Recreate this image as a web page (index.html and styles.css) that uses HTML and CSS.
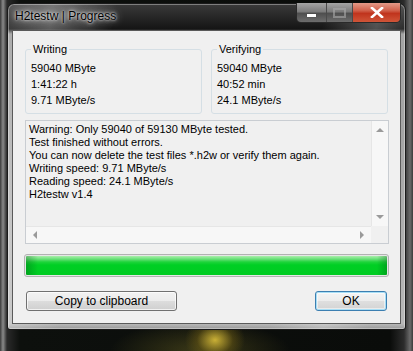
FILE: index.html
```html
<!DOCTYPE html>
<html lang="en">
<head>
    <meta charset="UTF-8">
    <title>H2testw | Progress</title>
    <link rel="stylesheet" href="styles.css">
</head>
<body>
    <div class="window">
        <div class="titlebar">
            <span class="title">H2testw | Progress</span>
            <div class="caption">
                <span class="cap cap-min"><i></i></span>
                <span class="cap cap-max"><i></i></span>
                <span class="cap cap-close">
                    <svg width="14" height="11" viewBox="0 0 14 11"><path d="M2 1 L12 10 M12 1 L2 10" stroke="#fff" stroke-width="2.6" stroke-linecap="square"/></svg>
                </span>
            </div>
        </div>
        <div class="client">
            <div class="groups">
                <fieldset class="group">
                    <legend>Writing</legend>
                    <p>59040 MByte</p>
                    <p>1:41:22 h</p>
                    <p>9.71 MByte/s</p>
                </fieldset>
                <fieldset class="group">
                    <legend>Verifying</legend>
                    <p>59040 MByte</p>
                    <p>40:52 min</p>
                    <p>24.1 MByte/s</p>
                </fieldset>
            </div>
            <div class="log">
                <div class="log-text">
                    <p>Warning: Only 59040 of 59130 MByte tested.</p>
                    <p>Test finished without errors.</p>
                    <p>You can now delete the test files *.h2w or verify them again.</p>
                    <p>Writing speed: 9.71 MByte/s</p>
                    <p>Reading speed: 24.1 MByte/s</p>
                    <p>H2testw v1.4</p>
                </div>
                <div class="vscroll"><span class="arr up"></span><span class="arr down"></span></div>
                <div class="hscroll"><span class="arr left"></span><span class="arr right"></span></div>
                <div class="corner"></div>
            </div>
            <div class="progress"><div class="fill"></div></div>
            <div class="buttons">
                <button class="btn btn-copy">Copy to clipboard</button>
                <button class="btn btn-ok">OK</button>
            </div>
        </div>
    </div>
</body>
</html>
```
FILE: styles.css
```css
body {
    margin: 0;
    padding: 3px 7px 0;
    height: 348px;
    overflow: hidden;
    font-family: "Liberation Sans", Arial, sans-serif;
    background:
        radial-gradient(ellipse 30px 24px at 215px 340px, rgba(230, 200, 60, 0.85), rgba(120, 100, 20, 0.4) 60%, transparent),
        radial-gradient(ellipse 90px 30px at 200px 351px, rgba(90, 85, 30, 0.6), transparent),
        linear-gradient(to right, #3a3a3a 0, #8a8a8a 3px, #2a2a2a 7px, #0d100d 20px, #0a0c0a 390px, #2c2c2c 404px, #6a6a6a 410px, #3a3a3a 413px);
}
.window {
    width: 399px;
    height: 327px;
    box-sizing: border-box;
    border: 1px solid #1a1a1a;
    border-radius: 7px 7px 3px 3px;
    background:
        linear-gradient(100deg, rgba(255, 255, 255, 0.15) 0, rgba(255, 255, 255, 0.3) 10%, transparent 24%, transparent 70%, rgba(255, 255, 255, 0.25) 82%, transparent 92%),
        linear-gradient(to bottom, #3a3a3a 0, #151515 25px, #9a9a9a 30px, #b8b8b8 320px, #8a8a8a 327px);
    box-shadow: inset 0 0 0 1px rgba(255, 255, 255, 0.35);
    display: flex;
    flex-direction: column;
}
.titlebar {
    height: 26px;
    display: flex;
    justify-content: space-between;
    align-items: flex-start;
}
.title {
    margin: 5px 0 0 5px;
    padding: 0 2px;
    font-size: 12px;
    line-height: 14px;
    color: #000;
    text-shadow: 0 0 8px #ddd, 0 0 4px #ddd, 0 0 2px #eee;
}
.caption {
    display: flex;
    margin: -1px 4px 0 0;
    height: 19px;
    border: 1px solid #2a2a2a;
    border-top: none;
    border-radius: 0 0 5px 5px;
    overflow: hidden;
}
.cap {
    display: flex;
    align-items: center;
    justify-content: center;
    height: 19px;
}
.cap-min, .cap-max {
    width: 29px;
    border-right: 1px solid #4a4a4a;
    background: linear-gradient(to bottom, #a5a5a5 0, #7c7c7c 45%, #4f4f4f 55%, #6d6d6d 100%);
}
.cap-max {
    width: 25px;
}
.cap-min i {
    display: block;
    width: 9px;
    height: 3px;
    margin-top: 6px;
    background: #fff;
    box-shadow: 0 0 1px #333;
}
.cap-max i {
    display: block;
    width: 9px;
    height: 6px;
    border: 2px solid #aaa;
    opacity: 0.6;
}
.cap-close {
    width: 47px;
    background: linear-gradient(to bottom, #e39a88 0, #d0604a 40%, #c0341d 55%, #d05538 100%);
}
.client {
    margin: 0 4px;
    height: 294px;
    box-sizing: border-box;
    border: 1px solid #5a5a5a;
    background: #f0f0f0;
    padding: 11px 12px 0 12px;
    font-size: 11px;
    color: #000;
}
.client p {
    margin: 0;
}
.groups {
    display: grid;
    grid-template-columns: 177px 177px;
    gap: 9px;
}
.group {
    margin: 0;
    height: 72px;
    box-sizing: border-box;
    border: 1px solid #d5dfe5;
    border-radius: 3px;
    padding: 4px 5px 0;
}
.group legend {
    padding: 0 2px;
    line-height: 14px;
}
.group p {
    line-height: 16px;
}
.log {
    margin-top: 6px;
    width: 364px;
    height: 124px;
    box-sizing: border-box;
    border: 1px solid #c9cdd2;
    background: #f0f0f0;
    display: grid;
    grid-template-columns: 1fr 17px;
    grid-template-rows: 1fr 17px;
}
.log-text {
    padding: 2px 3px;
    line-height: 13px;
    white-space: nowrap;
    overflow: hidden;
}
.vscroll {
    background: #f7f7f7;
    border-left: 1px solid #e6e6e6;
    display: flex;
    flex-direction: column;
    justify-content: space-between;
    align-items: center;
    padding: 7px 0 7px;
}
.hscroll {
    background: #f7f7f7;
    border-top: 1px solid #e6e6e6;
    display: flex;
    justify-content: space-between;
    align-items: center;
    padding: 0 7px;
}
.corner {
    background: #f0f0f0;
}
.arr {
    width: 0;
    height: 0;
}
.arr.up {
    border: 4px solid transparent;
    border-top: none;
    border-bottom: 4px solid #9a9a9a;
}
.arr.down {
    border: 4px solid transparent;
    border-bottom: none;
    border-top: 4px solid #9a9a9a;
}
.arr.left {
    border: 4px solid transparent;
    border-left: none;
    border-right: 4px solid #9a9a9a;
}
.arr.right {
    border: 4px solid transparent;
    border-right: none;
    border-left: 4px solid #9a9a9a;
}
.progress {
    margin: 10px 0 0 -1px;
    width: 365px;
    height: 23px;
    box-sizing: border-box;
    border: 1px solid #b2b2b2;
    border-radius: 3px;
    background: #e6e6e6;
    padding: 1px;
}
.fill {
    height: 100%;
    border-radius: 1px;
    background:
        linear-gradient(to right, rgba(0, 90, 20, 0.35), transparent 12px, transparent 351px, rgba(0, 90, 20, 0.35)),
        linear-gradient(to bottom, #a8efaa 0, #6be07a 3px, #1ed43a 6px, #00cf24 9px, #00cc22 100%);
}
.buttons {
    margin-top: 14px;
    display: flex;
    justify-content: space-between;
    padding: 0 1px;
}
.btn {
    height: 20px;
    padding: 0;
    font-family: "Liberation Sans", Arial, sans-serif;
    font-size: 12px;
    color: #000;
    border: 1px solid #707070;
    border-radius: 3px;
    background: linear-gradient(to bottom, #f2f2f2 0, #ebebeb 50%, #dddddd 50%, #cfcfcf 100%);
    box-shadow: inset 0 0 0 1px rgba(255, 255, 255, 0.7);
}
.btn-copy {
    width: 151px;
}
.btn-ok {
    width: 72px;
    border-color: #3c7fb1;
    box-shadow: inset 0 0 0 1px #a8def5, inset 0 0 0 2px rgba(255, 255, 255, 0.5);
    background: linear-gradient(to bottom, #f4f4f4 0, #ececec 50%, #dfdfdf 50%, #d3d3d3 100%);
}
```
